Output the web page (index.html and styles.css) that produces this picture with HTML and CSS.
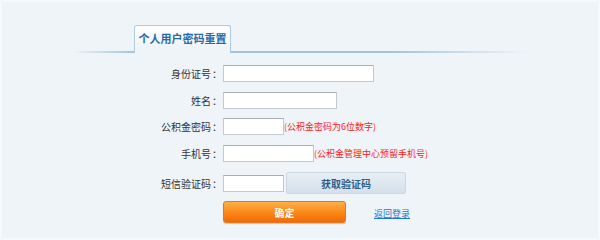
FILE: index.html
```html
<!DOCTYPE html>
<html lang="zh">
<head>
<meta charset="utf-8">
<title>个人用户密码重置</title>
<link rel="stylesheet" href="styles.css">
</head>
<body>
<div class="page">
  <div class="header">
    <div class="tab">个人用户密码重置</div>
  </div>
  <form class="form">
    <div class="row">
      <label class="label">身份证号<span class="colon">：</span></label>
      <input class="inp w151" type="text">
    </div>
    <div class="row">
      <label class="label">姓名<span class="colon">：</span></label>
      <input class="inp w114" type="text">
    </div>
    <div class="row">
      <label class="label">公积金密码<span class="colon">：</span></label>
      <input class="inp w61" type="password">
      <span class="hint">(公积金密码为6位数字)</span>
    </div>
    <div class="row">
      <label class="label">手机号<span class="colon">：</span></label>
      <input class="inp w91" type="text">
      <span class="hint">(公积金管理中心预留手机号)</span>
    </div>
    <div class="row row-code">
      <label class="label">短信验证码<span class="colon">：</span></label>
      <input class="inp w61" type="text">
      <button type="button" class="btn-code">获取验证码</button>
    </div>
    <div class="row row-submit">
      <span class="label"></span>
      <button type="button" class="btn-ok">确定</button>
      <a class="back" href="#">返回登录</a>
    </div>
  </form>
</div>
</body>
</html>
```
FILE: styles.css
```css
html, body {
  margin: 0;
  padding: 0;
}
body {
  width: 600px;
  height: 240px;
  overflow: hidden;
  font-family: "Noto Sans CJK SC", "Liberation Sans", sans-serif;
  background: #f7fafd;
}
.page {
  box-sizing: border-box;
  margin: 2px;
  width: 596px;
  height: 236px;
  background: #eff4f9;
}
.header {
  height: 51px;
  box-sizing: border-box;
  padding-left: 132px;
  display: flex;
  align-items: flex-end;
  background-image: linear-gradient(to right, rgba(158,192,216,0) 70px, #a3c4da 132px, #a3c4da 390px, rgba(158,192,216,0) 525px);
  background-size: 100% 2px;
  background-position: 0 49px;
  background-repeat: no-repeat;
}
.tab {
  box-sizing: border-box;
  height: 28px;
  width: 97px;
  border: 1px solid #aecbe0;
  border-bottom: none;
  border-radius: 3px 3px 0 0;
  background: linear-gradient(#ffffff, #eff4f9 80%);
  color: #2a6aa6;
  font-size: 11px;
  font-weight: bold;
  text-align: center;
  line-height: 24px;
  letter-spacing: 0;
}
.form {
  margin: 12px 0 0 0;
  padding: 0;
}
.row {
  display: flex;
  align-items: center;
  height: 17px;
  margin-bottom: 10px;
}
.row:nth-child(2) { margin-bottom: 9px; }
.row-code {
  height: 22px;
  margin-top: 9px;
  margin-bottom: 7px;
}
.row-submit {
  height: 22px;
}
.label {
  box-sizing: border-box;
  width: 220px;
  text-align: right;
  font-size: 10px;
  color: #333333;
  flex: none;
}
.colon {
  font-family: "Noto Sans CJK TC", "Noto Sans CJK SC", sans-serif;
  margin-left: 1px;
}
.inp {
  box-sizing: border-box;
  height: 17px;
  margin: 0 0 0 1px;
  padding: 0 2px;
  border: 1px solid #c4c9ce;
  border-top-color: #a9aeb3;
  background: #ffffff;
  font-size: 10px;
  outline: none;
}
.w151 { width: 151px; }
.w114 { width: 114px; }
.w61 { width: 61px; }
.w91 { width: 91px; }
.hint {
  font-size: 9px;
  color: #ff2020;
  margin-left: 0;
}
.btn-code {
  box-sizing: border-box;
  width: 120px;
  height: 22px;
  margin-left: 2px;
  border: 1px solid #cdd8e2;
  border-radius: 2px;
  background: linear-gradient(#e7eef5, #d5e0ea);
  color: #2f5e88;
  font-family: inherit;
  font-size: 10px;
  font-weight: bold;
  padding: 0;
}
.btn-ok {
  box-sizing: border-box;
  width: 123px;
  height: 22px;
  margin-left: 1px;
  border: 1px solid #e8751c;
  border-radius: 3px;
  background: linear-gradient(#ffb04a, #fb8a1a 50%, #ef6a06);
  box-shadow: 0 1px 1px rgba(120,60,0,0.25);
  color: #ffffff;
  font-family: inherit;
  font-size: 10px;
  font-weight: bold;
  padding: 0;
}
.back {
  margin-left: 28px;
  margin-top: 3px;
  font-size: 9px;
  color: #1f6fd4;
  text-decoration: underline;
}
```
